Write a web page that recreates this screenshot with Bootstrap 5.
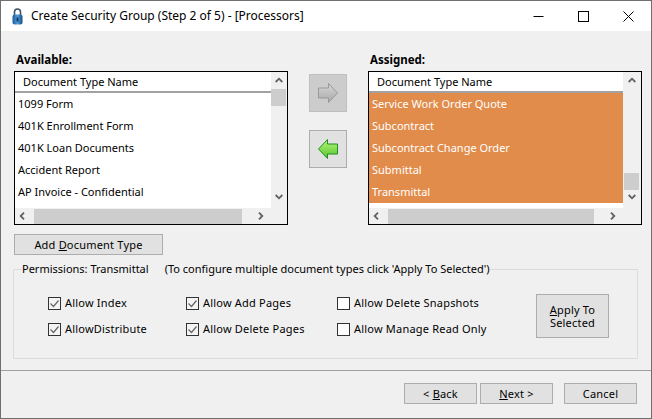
<!DOCTYPE html>
<html lang="en">
<head>
  <meta charset="UTF-8">
  <meta name="viewport" content="width=device-width, initial-scale=1">
  <title>Create Security Group</title>
  <link href="https://cdn.jsdelivr.net/npm/bootstrap@5.3.0/dist/css/bootstrap.min.css" rel="stylesheet">
  <style>
    body { background: #f0f0f0; overflow: hidden; font-family: "Noto Sans", "Liberation Sans", sans-serif; font-size: 11px; color: #000; }

    .win { width: 652px; height: 419px; border: 1px solid #6f6f6f; background: #f0f0f0; }

    .title-bar { height: 30px; background: #fff; padding-left: 11px; }
    .title-text { font-size: 12px; margin-left: 8px; }
    .win-ctl { width: 45px; height: 30px; }

    .lists { padding: 21px 0 0 13px; }
    .list-head { font-weight: 700; height: 19px; line-height: 15px; padding-left: 2px; font-size: 11.5px; }
    .list-box { width: 274px; height: 154px; border: 1px solid #000; background: #f0f0f0; display: grid; grid-template-rows: 136px 16px; }
    .list-box-left { grid-template-columns: 256px 16px; }
    .list-box-right { grid-template-columns: 254px 18px; }
    .list-main { background: #fff; overflow: hidden; }
    .col-head { height: 21px; line-height: 20px; padding-left: 8px; border-bottom: 2px solid #a2a2a2; background: #fff; }
    .doc-row { height: 22px; line-height: 22px; padding-left: 3px; white-space: nowrap; }
    .doc-row-sel { background: #e28c4b; color: #fff; }

    .vscroll { position: relative; }
    .vthumb { position: absolute; left: 0; width: 15px; height: 17px; background: #cdcdcd; }
    .list-box-left .vthumb { top: 17px; }
    .list-box-right .vthumb { top: 101px; left: 1px; }
    .vscroll .arrow-up { position: absolute; top: 5px; left: 4px; }
    .vscroll .arrow-down { position: absolute; top: 122px; left: 4px; }
    .list-box-right .vscroll svg { left: 5px !important; }

    .hscroll { padding: 0 4px; }
    .hthumb { height: 15px; background: #cdcdcd; }
    .list-box-left .hthumb { width: 208px; margin-left: 9px; margin-right: 16px; }
    .list-box-right .hthumb { width: 206px; margin-left: 9px; margin-right: 16px; }

    .mid-col { width: 80px; padding: 22px 0 0 21px; }
    .move-btn { width: 38px; height: 38px; padding: 0; border-radius: 0; border: 1px solid #adadad; background: #e1e1e1; }
    .move-btn:disabled { background: #cccccc; border-color: #bfbfbf; opacity: 1; }
    .move-gap { margin-top: 18px; }

    .win-btn { border-radius: 0; border: 1px solid #adadad; background: #e1e1e1; color: #000; font-size: 11px; padding: 0; line-height: 13px; letter-spacing: .2px; }
    .add-btn { width: 149px; height: 21px; margin: 9px 0 0 13px; display: block; }
    .apply-btn { width: 73px; height: 44px; }
    .foot-btn { width: 73px; height: 21px; }

    .perm-box { position: relative; width: 625px; height: 90px; margin: 14px 0 0 12px; border: 1px solid #dcdcdc; padding: 24px 0 0 34px; display: grid; grid-template-columns: 138px 151px 199px 73px; grid-template-rows: 19px 19px; row-gap: 7px; }
    .perm-title { position: absolute; top: -8px; left: 7px; background: #f0f0f0; padding: 0 1px; white-space: pre; line-height: 14px; }
    .perm-note { margin-left: 16px; }
    .perm-check { display: flex; align-items: center; gap: 4px; margin: 0; white-space: nowrap; letter-spacing: .2px; }
    .perm-check .form-check-input { width: 13px; height: 13px; margin: 0; border: 1px solid #333; border-radius: 0; background-color: #fff; flex: none; }
    .perm-check .form-check-input:checked { background-color: #f4f4f4; border-color: #333; background-size: 11px 11px; background-image: url("data:image/svg+xml,%3csvg xmlns='http://www.w3.org/2000/svg' viewBox='0 0 11 11'%3e%3cpath fill='none' stroke='%23666' stroke-width='1.2' d='M1.5 5.5l3 3 5-6'/%3e%3c/svg%3e"); }
    .apply-cell { grid-column: 4; grid-row: 1 / span 2; }

    .foot-line { margin-top: 11px; height: 1px; background: #a0a0a0; }
    .foot-bar { padding: 12px 14px 0 0; }
    .foot-gap { margin-left: 3px; }
    .foot-gap-wide { margin-left: 11px; }
  </style>
</head>
<body class="m-0">

  <div class="win">
    <!-- barra de titulo -->
    <div class="title-bar d-flex align-items-center">
      <svg width="11" height="17" viewBox="0 0 11 17">
        <defs>
          <linearGradient id="lockFill" x1="0" y1="0" x2="1" y2="0">
            <stop offset="0" stop-color="#1d5e9e"/>
            <stop offset=".5" stop-color="#4f9ad8"/>
            <stop offset="1" stop-color="#174f86"/>
          </linearGradient>
        </defs>
        <path d="M2.5 7V4a3 3 0 0 1 6 0v3" fill="none" stroke="#3f5468" stroke-width="1.6"/>
        <rect x="0.5" y="6.5" width="10" height="10" rx="2" fill="url(#lockFill)"/>
        <rect x="4.6" y="9.5" width="1.8" height="4" fill="#12365a"/>
      </svg>
      <span class="title-text">Create Security Group (Step 2 of 5) - [Processors]</span>
      <div class="d-flex ms-auto">
        <div class="win-ctl d-flex align-items-center justify-content-center">
          <svg width="11" height="11" viewBox="0 0 11 11"><path d="M0.5 5.5h10" stroke="#000"/></svg>
        </div>
        <div class="win-ctl d-flex align-items-center justify-content-center">
          <svg width="11" height="11" viewBox="0 0 11 11"><rect x="0.5" y="0.5" width="10" height="10" fill="none" stroke="#000"/></svg>
        </div>
        <div class="win-ctl d-flex align-items-center justify-content-center">
          <svg width="11" height="11" viewBox="0 0 11 11"><path d="M0.5 0.5l10 10M10.5 0.5l-10 10" stroke="#000"/></svg>
        </div>
      </div>
    </div>

    <div class="lists d-flex">
      <div>
        <div class="list-head">Available:</div>
        <div class="list-box list-box-left">
          <div class="list-main">
            <div class="col-head">Document Type Name</div>
            <div class="doc-row">1099 Form</div>
            <div class="doc-row">401K Enrollment Form</div>
            <div class="doc-row">401K Loan Documents</div>
            <div class="doc-row">Accident Report</div>
            <div class="doc-row">AP Invoice - Confidential</div>
          </div>
          <div class="vscroll">
            <svg class="arrow-up" width="8" height="6" viewBox="0 0 8 6"><path d="M0.7 5L4 1.7 7.3 5" fill="none" stroke="#606060" stroke-width="1.8"/></svg>
            <div class="vthumb"></div>
            <svg class="arrow-down" width="8" height="6" viewBox="0 0 8 6"><path d="M0.7 1L4 4.3 7.3 1" fill="none" stroke="#606060" stroke-width="1.8"/></svg>
          </div>
          <div class="hscroll d-flex align-items-center">
            <svg width="6" height="8" viewBox="0 0 6 8"><path d="M5 0.7L1.7 4 5 7.3" fill="none" stroke="#606060" stroke-width="1.8"/></svg>
            <div class="hthumb"></div>
            <svg width="6" height="8" viewBox="0 0 6 8"><path d="M1 0.7L4.3 4 1 7.3" fill="none" stroke="#606060" stroke-width="1.8"/></svg>
          </div>
          <div></div>
        </div>
      </div>

      <div class="mid-col">
        <button class="btn move-btn d-flex align-items-center justify-content-center" disabled>
          <svg width="20" height="20" viewBox="0 0 20 20">
            <defs>
              <linearGradient id="grayFill" x1="0" y1="0" x2="0" y2="1">
                <stop offset="0" stop-color="#d6d6d6"/>
                <stop offset="1" stop-color="#a9a9a9"/>
              </linearGradient>
            </defs>
            <polygon points="0.5,5 10.5,5 10.5,0.5 19.5,10 10.5,19.5 10.5,15 0.5,15" fill="url(#grayFill)" stroke="#989898"/>
          </svg>
        </button>
        <button class="btn move-btn move-gap d-flex align-items-center justify-content-center">
          <svg width="20" height="20" viewBox="0 0 20 20">
            <defs>
              <linearGradient id="greenFill" x1="0" y1="0" x2="0" y2="1">
                <stop offset="0" stop-color="#b4f57a"/>
                <stop offset="1" stop-color="#58c42c"/>
              </linearGradient>
            </defs>
            <polygon points="19.5,5 9.5,5 9.5,0.5 0.5,10 9.5,19.5 9.5,15 19.5,15" fill="url(#greenFill)" stroke="#1f8f1f"/>
          </svg>
        </button>
      </div>

      <div>
        <div class="list-head">Assigned:</div>
        <div class="list-box list-box-right">
          <div class="list-main">
            <div class="col-head">Document Type Name</div>
            <div class="doc-row doc-row-sel">Service Work Order Quote</div>
            <div class="doc-row doc-row-sel">Subcontract</div>
            <div class="doc-row doc-row-sel">Subcontract Change Order</div>
            <div class="doc-row doc-row-sel">Submittal</div>
            <div class="doc-row doc-row-sel">Transmittal</div>
          </div>
          <div class="vscroll">
            <svg class="arrow-up" width="8" height="6" viewBox="0 0 8 6"><path d="M0.7 5L4 1.7 7.3 5" fill="none" stroke="#606060" stroke-width="1.8"/></svg>
            <div class="vthumb"></div>
            <svg class="arrow-down" width="8" height="6" viewBox="0 0 8 6"><path d="M0.7 1L4 4.3 7.3 1" fill="none" stroke="#606060" stroke-width="1.8"/></svg>
          </div>
          <div class="hscroll d-flex align-items-center">
            <svg width="6" height="8" viewBox="0 0 6 8"><path d="M5 0.7L1.7 4 5 7.3" fill="none" stroke="#606060" stroke-width="1.8"/></svg>
            <div class="hthumb"></div>
            <svg width="6" height="8" viewBox="0 0 6 8"><path d="M1 0.7L4.3 4 1 7.3" fill="none" stroke="#606060" stroke-width="1.8"/></svg>
          </div>
          <div></div>
        </div>
      </div>
    </div>

    <button class="btn win-btn add-btn">Add <u>D</u>ocument Type</button>

    <div class="perm-box">
      <div class="perm-title">Permissions: Transmittal<span class="perm-note">(To configure multiple document types click 'Apply To Selected')</span></div>

      <label class="perm-check"><input class="form-check-input" type="checkbox" checked>Allow Index</label>
      <label class="perm-check"><input class="form-check-input" type="checkbox" checked>Allow Add Pages</label>
      <label class="perm-check"><input class="form-check-input" type="checkbox">Allow Delete Snapshots</label>
      <div class="apply-cell"><button class="btn win-btn apply-btn"><u>A</u>pply To<br>Selected</button></div>

      <label class="perm-check"><input class="form-check-input" type="checkbox" checked>AllowDistribute</label>
      <label class="perm-check"><input class="form-check-input" type="checkbox" checked>Allow Delete Pages</label>
      <label class="perm-check"><input class="form-check-input" type="checkbox">Allow Manage Read Only</label>
    </div>

    <div class="foot-line"></div>
    <div class="foot-bar d-flex justify-content-end">
      <button class="btn win-btn foot-btn">&lt; <u>B</u>ack</button>
      <button class="btn win-btn foot-btn foot-gap"><u>N</u>ext &gt;</button>
      <button class="btn win-btn foot-btn foot-gap-wide">Cancel</button>
    </div>
  </div>

  <script src="https://cdn.jsdelivr.net/npm/bootstrap@5.3.0/dist/js/bootstrap.bundle.min.js"></script>
</body>
</html>
